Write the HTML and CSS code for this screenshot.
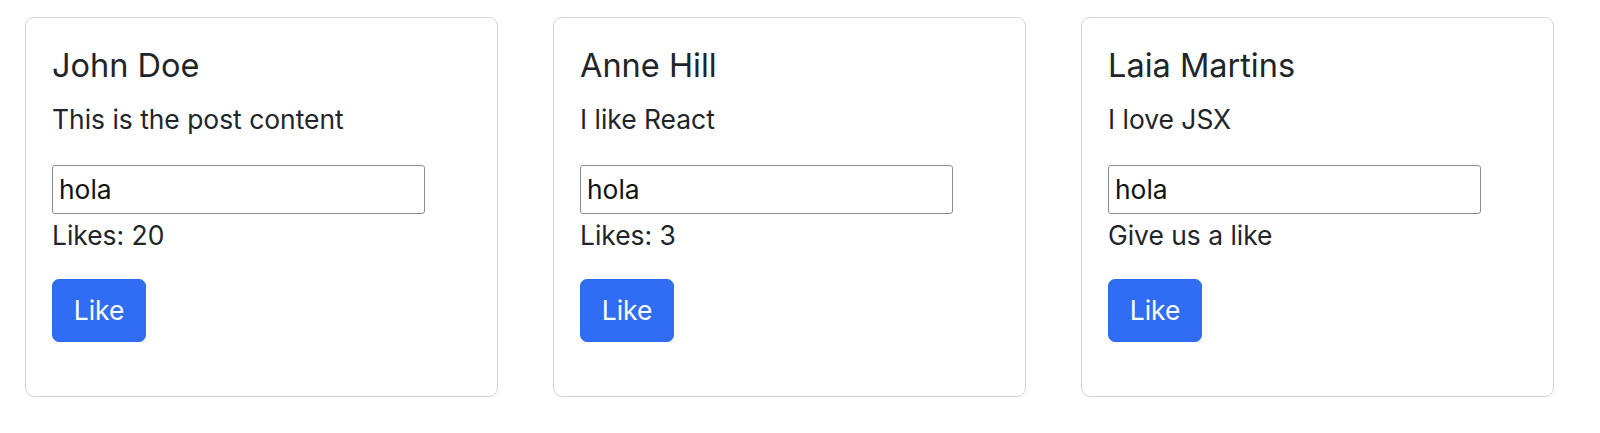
FILE: index.html
```html
<!DOCTYPE html>
<html>
<head>
<meta charset="utf-8">
<link rel="stylesheet" href="styles.css">
</head>
<body>
<div class="row">
  <div class="card">
    <h5 class="card-title">John Doe</h5>
    <p class="card-text">This is the post content</p>
    <input class="field" type="text" value="hola">
    <div class="likes">Likes: 20</div>
    <button class="btn">Like</button>
  </div>
  <div class="card">
    <h5 class="card-title">Anne Hill</h5>
    <p class="card-text">I like React</p>
    <input class="field" type="text" value="hola">
    <div class="likes">Likes: 3</div>
    <button class="btn">Like</button>
  </div>
  <div class="card">
    <h5 class="card-title">Laia Martins</h5>
    <p class="card-text">I love JSX</p>
    <input class="field" type="text" value="hola">
    <div class="likes">Give us a like</div>
    <button class="btn">Like</button>
  </div>
</div>
</body>
</html>
```
FILE: styles.css
```css
html, body {
  margin: 0;
  padding: 0;
  background: #ffffff;
}
body {
  font-family: Inter, "Noto Sans", "Liberation Sans", sans-serif;
  color: #212529;
  font-size: 26.4px;
  line-height: 38.4px;
}
.row {
  display: flex;
  gap: 55px;
  padding: 17px 0 0 25px;
}
.card {
  box-sizing: border-box;
  width: 473px;
  height: 380px;
  border: 1.6px solid #d3d3d6;
  border-radius: 9px;
  padding: 28.6px 26px 0 26px;
  display: flex;
  flex-direction: column;
  align-items: flex-start;
}
.card-title {
  margin: 0 0 14.8px 0;
  font-size: 32.5px;
  font-weight: 400;
  line-height: 38.4px;
}
.card-text {
  margin: 0 0 23.6px 0;
}
.field {
  box-sizing: border-box;
  width: 373px;
  height: 49px;
  margin: 3px 0 0 0;
  padding: 0 6px;
  border: 1.6px solid #8d8c9f;
  border-radius: 3px;
  font-family: inherit;
  font-size: 26.4px;
  color: #111;
  background: #fff;
}
.likes {
  margin-top: 2px;
  line-height: 38px;
}
.btn {
  margin-top: 25px;
  width: 94px;
  height: 63px;
  border: 1px solid #2f69ee;
  border-radius: 7px;
  background: #316cf4;
  color: #ffffff;
  font-family: inherit;
  font-size: 26.4px;
  padding: 0;
}
```
